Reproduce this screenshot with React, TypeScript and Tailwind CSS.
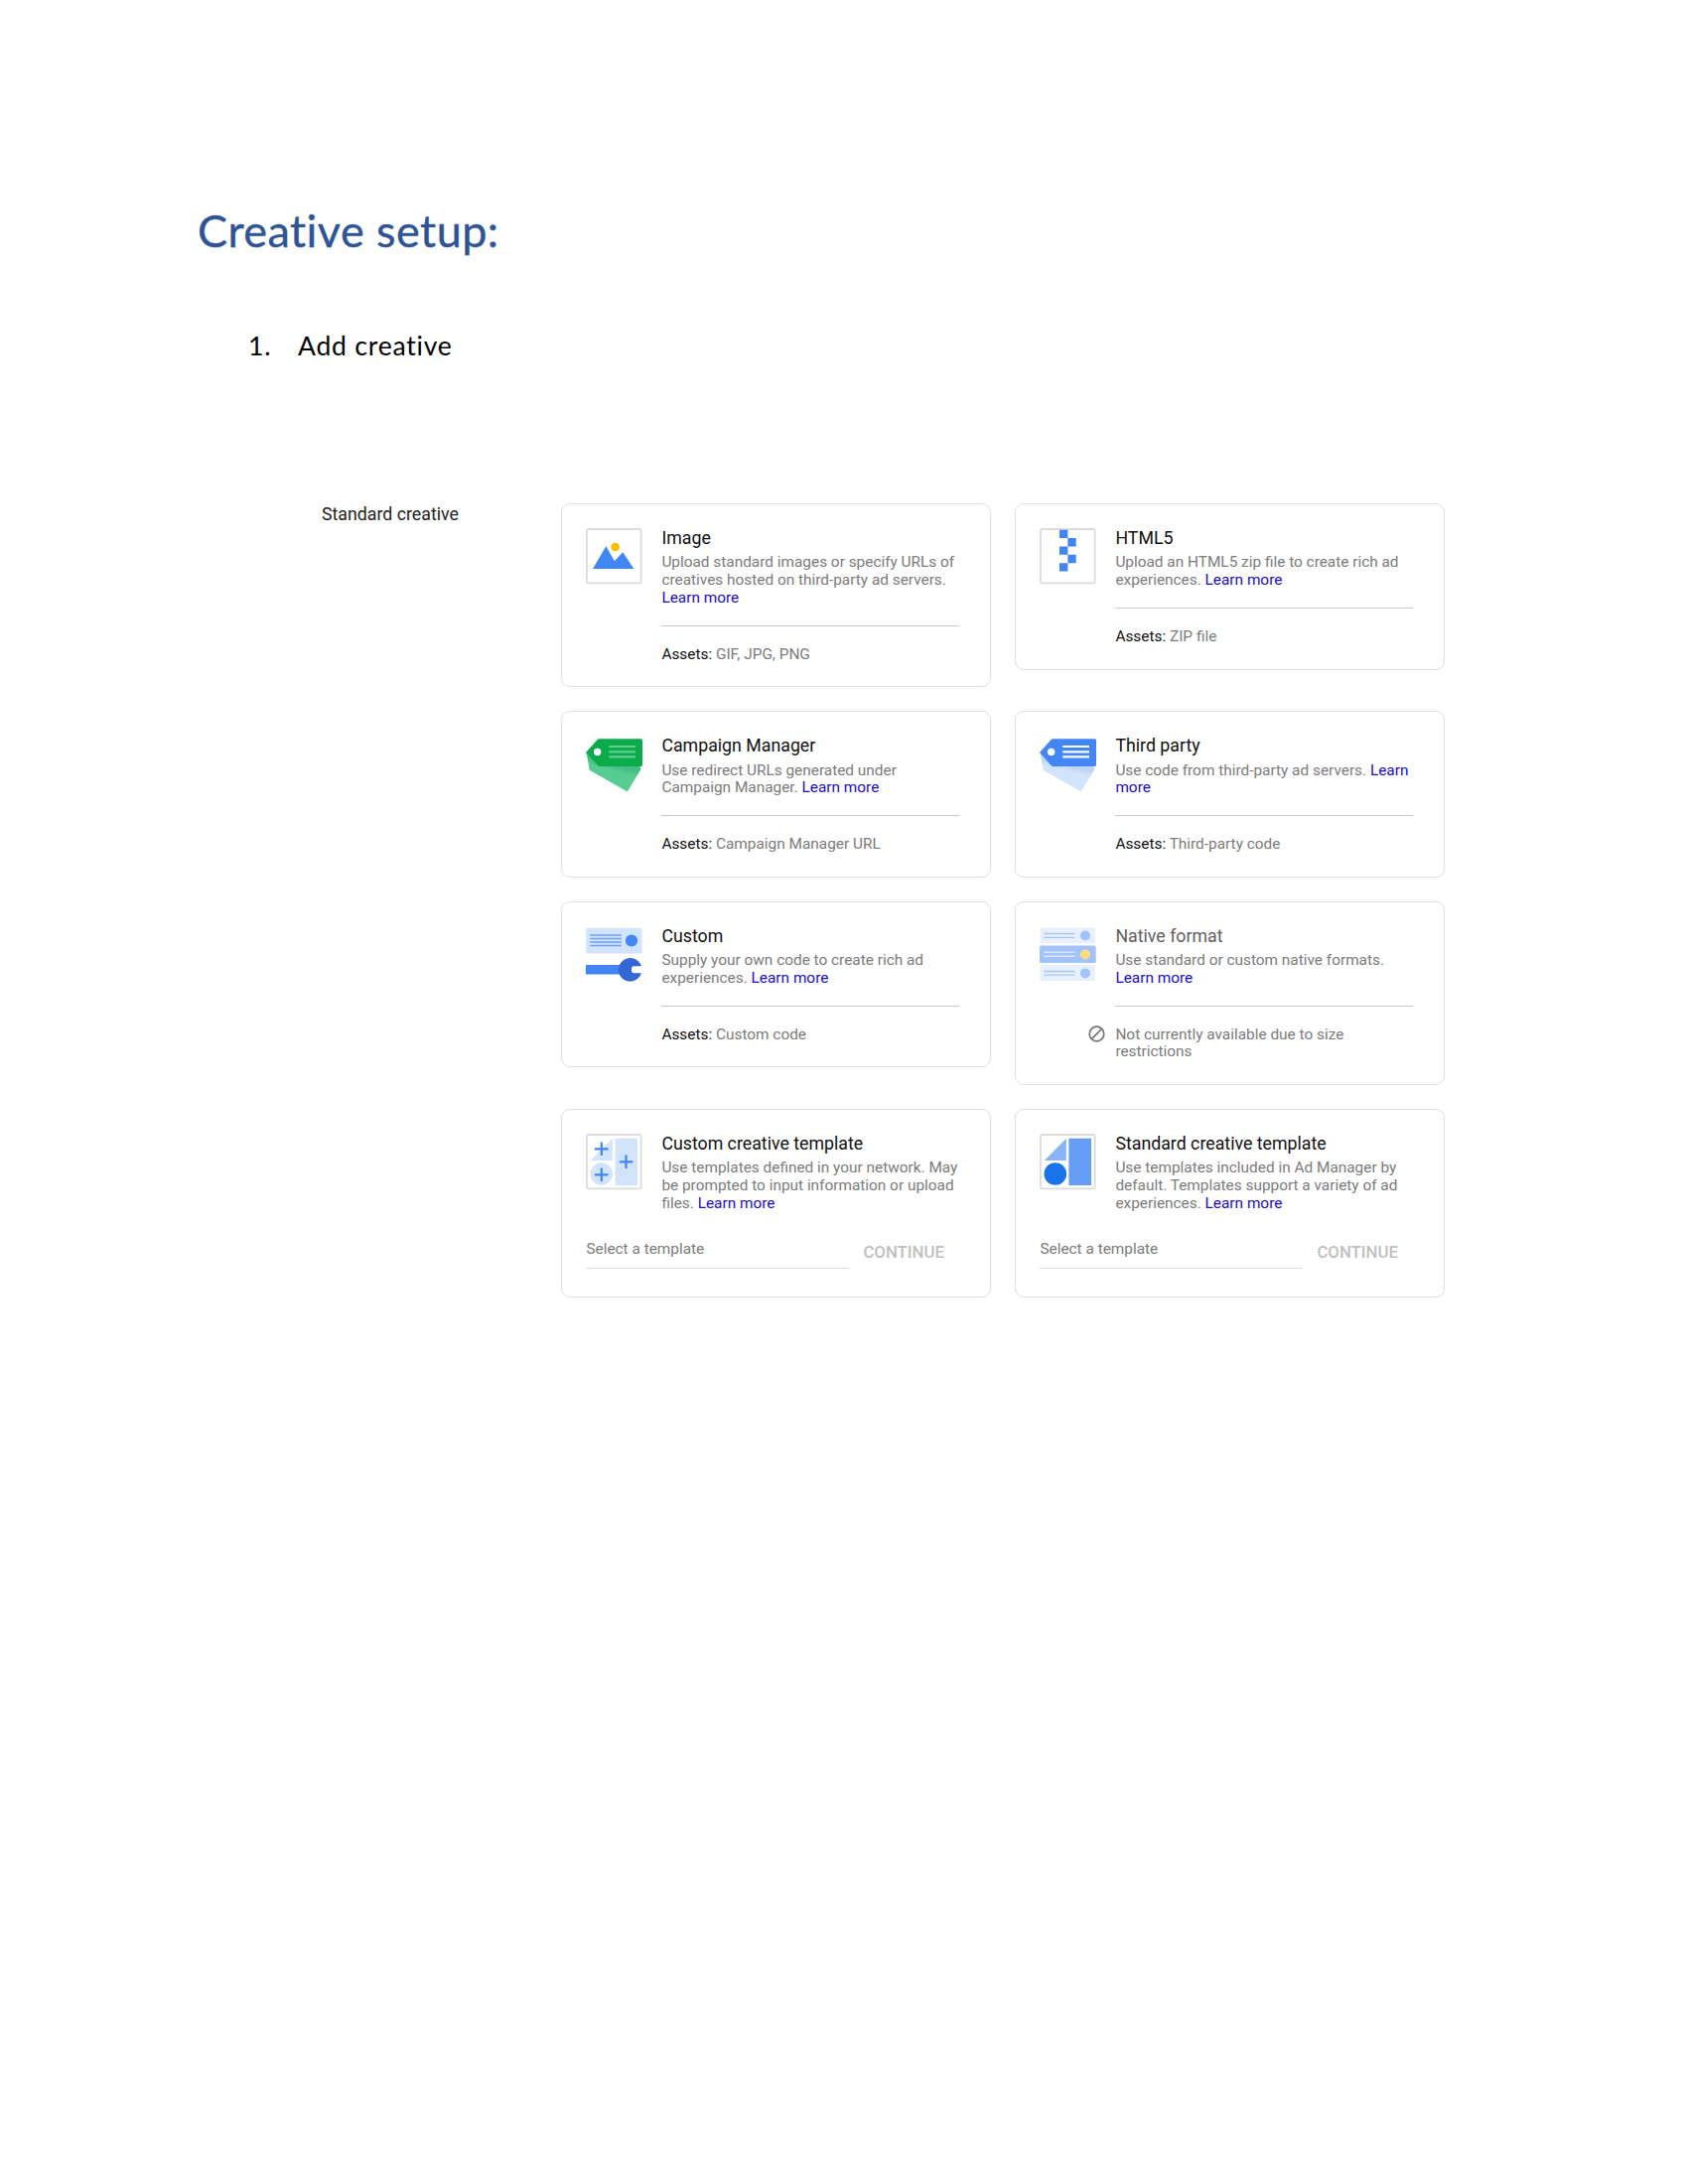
import type { ReactNode } from "react";

function Frame({ children }: { children: ReactNode }) {
  return (
    <svg width="57" height="57" viewBox="0 0 57 57" className="block">
      {children}
    </svg>
  );
}

function Border() {
  return <rect x="1" y="1" width="54.6" height="54.4" rx="1.5" fill="#fff" stroke="#dadce0" strokeWidth="1.8" />;
}

const ImageIcon = () => (
  <Frame>
    <Border />
    <circle cx="29.7" cy="19" r="4.3" fill="#fbbc04" />
    <path d="M7 41 20.3 18.3 28.9 33.2 37.3 24.3 48.4 41Z" fill="#4285f4" />
  </Frame>
);

const ZipIcon = () => (
  <Frame>
    <Border />
    <path
      d="M20 1.8h8.4v8.3H20zM28.4 10.1h8.3v8.4h-8.3zM20 18.5h8.4v8.3H20zM28.4 26.8h8.3v8.4h-8.3zM20 35.2h8.4v8.3H20z"
      fill="#4285f4"
    />
  </Frame>
);

function TagIcon({ tag, back, shade, lines, id }: { tag: string; back: string; shade: string; lines: string; id: string }) {
  return (
    <Frame>
      <defs>
        <linearGradient id={id} x1="30" y1="30" x2="28.5" y2="36" gradientUnits="userSpaceOnUse">
          <stop offset="0" stopColor={shade} />
          <stop offset="1" stopColor={back} />
        </linearGradient>
      </defs>
      <path d="M.6 17 3.7 34.8 41 56a1 1 0 0 0 1.4-.4L55.7 33.5 54 30.5H12Z" fill={`url(#${id})`} />
      <path d="M0 17 11.5 4.2Q12.3 3.3 13.5 3.3H55.5Q57 3.3 57 4.8V29.5Q57 31 55.5 31H13.5Q12.3 31 11.5 30.1Z" fill={tag} />
      <circle cx="11.7" cy="16.5" r="3.7" fill="#fff" />
      <path d="M23.3 11H50M23.3 16.3H50M23.3 21.4H50" stroke={lines} strokeWidth="2.2" />
    </Frame>
  );
}

const CustomIcon = () => (
  <Frame>
    <rect x=".3" y="2" width="56.2" height="25.5" rx="1.5" fill="#d2e3fc" />
    <path d="M4.3 8.9H36M4.3 12.4H36M4.3 15.9H36M4.3 19.4H36" stroke="#6f9ff0" strokeWidth="1.5" />
    <circle cx="46" cy="14.5" r="6.1" fill="#4285f4" />
    <path d="M0 39H37V48.5H0Z" fill="#4285f4" />
    <path d="M55.9 40.3A11.8 11.8 0 1 0 55.9 47.3H48.5Q46 47.3 46 45V42.6Q46 40.3 48.5 40.3Z" fill="#3367d6" />
  </Frame>
);

const NativeIcon = () => (
  <Frame>
    <rect x=".5" y="1.5" width="55.5" height="15.7" rx="1.2" fill="#e8f0fe" />
    <rect x="0" y="19.5" width="56.7" height="17.6" rx="1.5" fill="#a1c2fa" />
    <rect x=".5" y="39.3" width="55.5" height="15.7" rx="1.2" fill="#e8f0fe" />
    <path d="M4.3 7.5H35.5M4.3 11.3H35.5M4.3 45.5H35.5M4.3 49.2H35.5" stroke="#a9c7fa" strokeWidth="1.3" />
    <path d="M4.3 26.2H35.5M4.3 30.3H35.5" stroke="#dbe8fd" strokeWidth="1.4" />
    <circle cx="46" cy="9.5" r="5" fill="#a1c2fa" />
    <circle cx="46" cy="28.4" r="5" fill="#fddc80" />
    <circle cx="46" cy="47.4" r="5" fill="#a1c2fa" />
  </Frame>
);

const CustomTemplateIcon = () => (
  <Frame>
    <Border />
    <path d="M4.8 27 26.8 4.8V27ZM29.6 4.8H52V52H29.6Z" fill="#d2e3fc" />
    <circle cx="15.8" cy="40.5" r="11.2" fill="#d2e3fc" />
    <path
      d="M9 15.3H22.5M15.8 8.6V22M9 41.3H22.5M15.8 34.6V48M33.8 28.3H47.3M40.5 21.6V35"
      stroke="#4285f4"
      strokeWidth="2.2"
    />
  </Frame>
);

const StandardTemplateIcon = () => (
  <Frame>
    <Border />
    <path d="M4.8 27 26.8 4.8V27Z" fill="#8ab4f8" />
    <path d="M29.4 4.8H52V52H29.4Z" fill="#669df6" />
    <circle cx="15.8" cy="40.5" r="11.3" fill="#1a73e8" />
  </Frame>
);

const BlockedIcon = () => (
  <svg width="17" height="17" viewBox="0 0 17 17" className="mr-2.5 block">
    <circle cx="8.5" cy="8.5" r="7.3" fill="none" stroke="#757575" strokeWidth="1.7" />
    <path d="M3.4 13.6 13.6 3.4" stroke="#757575" strokeWidth="1.7" />
  </svg>
);

type CardProps = {
  icon: ReactNode;
  title: string;
  lines: string[];
  link?: string;
  linkNext?: string;
  assets?: string;
  blocked?: string[];
  template?: boolean;
};

function Card({ icon, title, lines, link, linkNext, assets, blocked, template }: CardProps) {
  return (
    <article className="w-[433px] rounded-[9px] border border-[#dfdfdf] pt-6 pl-6 text-[15.38px] leading-[17.75px] whitespace-nowrap text-[#7c7c7c]">
      <div className="grid grid-cols-[76px_300px]">
        <div>{icon}</div>
        <div>
          <h2 className={`text-[17.75px] leading-[21px] ${blocked ? "text-[#616161]" : "text-[#111]"}`}>{title}</h2>
          <p className="mt-[5.25px]">
            {lines.map((line, i) => (
              <span key={line}>
                {line}
                {i < lines.length - 1 && <br />}
              </span>
            ))}
            {link && <a className="text-[#1a0dcc]"> {link}</a>}
            {linkNext && (
              <>
                <br />
                <a className="text-[#1a0dcc]">{linkNext}</a>
              </>
            )}
          </p>
        </div>
        {!template && (
          <>
            <div className="flex justify-end pt-[38px]">{blocked && <BlockedIcon />}</div>
            <div className="mt-[18px] border-t border-[#c9c9c9] pt-5 pb-[23px]">
              {assets && (
                <p>
                  <span className="text-[#111]">Assets:</span> {assets}
                </p>
              )}
              {blocked?.map((line) => <p key={line}>{line}</p>)}
            </div>
          </>
        )}
      </div>
      {template && (
        <div className="mt-[28px] flex pb-[28.5px]">
          <div className="h-7 w-[265px] border-b border-[#dedede]">Select a template</div>
          <button className="mt-0.5 ml-[14px] h-[19px] text-[16.8px] leading-[19px] font-medium text-[#c0c0c0]">CONTINUE</button>
        </div>
      )}
    </article>
  );
}

const rows: [CardProps, CardProps][] = [
  [
    {
      icon: <ImageIcon />,
      title: "Image",
      lines: ["Upload standard images or specify URLs of", "creatives hosted on third-party ad servers."],
      linkNext: "Learn more",
      assets: "GIF, JPG, PNG",
    },
    {
      icon: <ZipIcon />,
      title: "HTML5",
      lines: ["Upload an HTML5 zip file to create rich ad", "experiences."],
      link: "Learn more",
      assets: "ZIP file",
    },
  ],
  [
    {
      icon: <TagIcon id="tag-green" tag="#0bab4b" back="#57cb92" shade="#45bd82" lines="#5fd092" />,
      title: "Campaign Manager",
      lines: ["Use redirect URLs generated under", "Campaign Manager."],
      link: "Learn more",
      assets: "Campaign Manager URL",
    },
    {
      icon: <TagIcon id="tag-blue" tag="#4285f4" back="#d2e3fc" shade="#c0d3f3" lines="#ffffff" />,
      title: "Third party",
      lines: ["Use code from third-party ad servers."],
      link: "Learn",
      linkNext: "more",
      assets: "Third-party code",
    },
  ],
  [
    {
      icon: <CustomIcon />,
      title: "Custom",
      lines: ["Supply your own code to create rich ad", "experiences."],
      link: "Learn more",
      assets: "Custom code",
    },
    {
      icon: <NativeIcon />,
      title: "Native format",
      lines: ["Use standard or custom native formats."],
      linkNext: "Learn more",
      blocked: ["Not currently available due to size", "restrictions"],
    },
  ],
  [
    {
      icon: <CustomTemplateIcon />,
      title: "Custom creative template",
      lines: ["Use templates defined in your network. May", "be prompted to input information or upload", "files."],
      link: "Learn more",
      template: true,
    },
    {
      icon: <StandardTemplateIcon />,
      title: "Standard creative template",
      lines: ["Use templates included in Ad Manager by", "default. Templates support a variety of ad", "experiences."],
      link: "Learn more",
      template: true,
    },
  ],
];

export default function App() {
  return (
    <main className="h-[2200px] w-[1700px] bg-white pt-[204px]">
      <h1 className="ml-[199px] font-['Lato',sans-serif] text-[45px] leading-[56px] tracking-[0.45px] text-[#2f5496] [-webkit-text-stroke:0.4px_#2f5496]">
        Creative setup:
      </h1>
      <ol className="mt-[70px] ml-[250px] font-['Lato',sans-serif] text-[26.5px] leading-9 tracking-[0.8px] text-black">
        <li className="flex">
          <span className="w-[50px]">1.</span>
          <span>Add creative</span>
        </li>
      </ol>
      <section className="mt-[141px] ml-[324px] flex font-['Roboto',sans-serif]">
        <div className="w-[241.4px] text-[17.75px] leading-[22px] text-[#222]">Standard creative</div>
        <div className="flex flex-col gap-6">
          {rows.map((pair) => (
            <div key={pair[0].title} className="flex items-start gap-6">
              {pair.map((card) => (
                <Card key={card.title} {...card} />
              ))}
            </div>
          ))}
        </div>
      </section>
    </main>
  );
}
